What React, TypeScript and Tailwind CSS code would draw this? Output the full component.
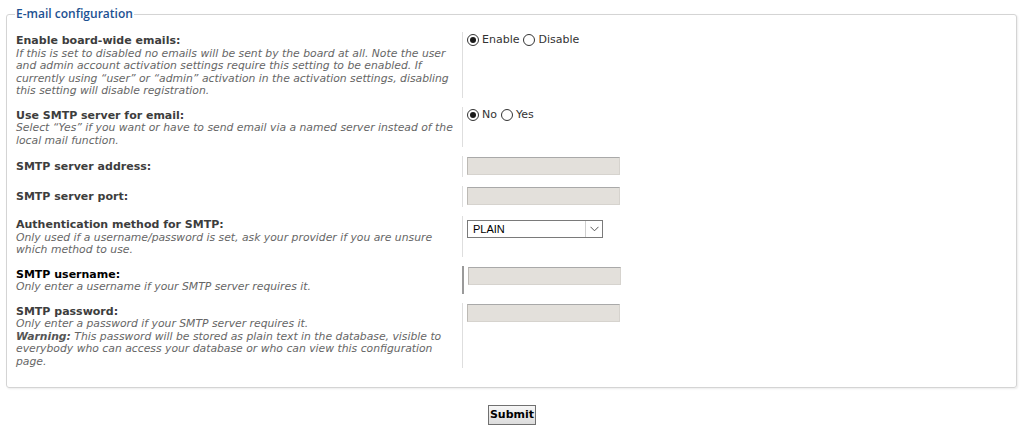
import React from 'react';

type Row = {
  label: string;
  explain?: React.ReactNode;
  control: React.ReactNode;
  active?: boolean;
};

const Radio: React.FC<{ checked?: boolean; label: string }> = ({ checked, label }) => (
  <span className="inline-flex items-center mr-[4px]">
    <span className="w-[12px] h-[12px] rounded-full border border-[#333] bg-white flex items-center justify-center">
      {checked && <span className="w-[6px] h-[6px] rounded-full bg-[#1a1a1a]" />}
    </span>
    <span className="ml-[3px] text-[#333]">{label}</span>
  </span>
);

const TextBox: React.FC = () => (
  <div className="w-[153px] h-[18px] bg-[#e3e0db] border border-[#d6d3ce] border-t-[#a9a9a9] border-l-[#bdbab5]" />
);

const Select: React.FC = () => (
  <div className="mt-[3px] w-[136px] h-[18px] bg-white border border-[#7a7a7a] flex items-stretch">
    <span className="flex-1 pl-[5px] leading-[16px] text-[11px] text-black font-['Liberation_Sans',Arial,sans-serif]">PLAIN</span>
    <span className="w-[17px] border-l border-[#cfcfcf] flex items-center justify-center">
      <svg width="9" height="6" viewBox="0 0 9 6" fill="none">
        <path d="M0.5 0.8 L4.5 4.8 L8.5 0.8" stroke="#555" strokeWidth="1" />
      </svg>
    </span>
  </div>
);

const rows: Row[] = [
  {
    label: 'Enable board-wide emails:',
    explain:
      'If this is set to disabled no emails will be sent by the board at all. Note the user and admin account activation settings require this setting to be enabled. If currently using “user” or “admin” activation in the activation settings, disabling this setting will disable registration.',
    control: (
      <div className="flex items-center mt-[1px]">
        <Radio checked label="Enable" />
        <Radio label="Disable" />
      </div>
    ),
  },
  {
    label: 'Use SMTP server for email:',
    explain: 'Select “Yes” if you want or have to send email via a named server instead of the local mail function.',
    control: (
      <div className="flex items-center mt-[1px]">
        <Radio checked label="No" />
        <Radio label="Yes" />
      </div>
    ),
  },
  { label: 'SMTP server address:', control: <TextBox /> },
  { label: 'SMTP server port:', control: <TextBox /> },
  {
    label: 'Authentication method for SMTP:',
    explain: 'Only used if a username/password is set, ask your provider if you are unsure which method to use.',
    control: <Select />,
  },
  {
    label: 'SMTP username:',
    explain: 'Only enter a username if your SMTP server requires it.',
    control: <TextBox />,
    active: true,
  },
  {
    label: 'SMTP password:',
    explain: (
      <>
        Only enter a password if your SMTP server requires it.
        <br />
        <b className="text-[#555]">Warning:</b> This password will be stored as plain text in the database, visible to
        everybody who can access your database or who can view this configuration page.
      </>
    ),
    control: <TextBox />,
  },
];

export default function App() {
  return (
    <div className="w-[1024px] h-[434px] bg-white font-['DejaVu_Sans',Verdana,sans-serif] text-[11px] leading-[12.5px] overflow-hidden">
      <fieldset className="mx-[6px] mr-[7px] mt-[6px] border border-[#d4d4d4] rounded-[3px] pl-[9px] pr-[10px] pb-[19px] shadow-[1px_1px_2px_rgba(0,0,0,0.08)]">
        <legend className="-ml-[1px] px-[1px] text-[#1c5192] text-[12px] leading-[16px] font-semibold font-['Open_Sans','DejaVu_Sans',sans-serif]">
          E-mail configuration
        </legend>
        <div className="pt-[10px] flex flex-col gap-[9px]">
          {rows.map((r) => (
            <div key={r.label} className="flex items-stretch">
              <div className={`w-[446px] shrink-0 pr-[4px] ${r.explain ? 'pt-[3px]' : 'pt-[5px]'}`}>
                <div className={`font-bold ${r.active ? 'text-black' : 'text-[#3d3d3d]'}`}>{r.label}</div>
                {r.explain && <div className="italic text-[#666] text-[10.8px]">{r.explain}</div>}
              </div>
              <div className={`flex-1 border-l pt-[1px] pb-[2px] pl-[4px] ${r.active ? 'border-[#9a9a9a] border-l-2 pl-[3px]' : 'border-[#dedede]'}`}>
                {r.control}
              </div>
            </div>
          ))}
        </div>
      </fieldset>
      <div className="flex justify-center mt-[17px]">
        <button className="h-[20px] px-[1px] border border-[#707070] bg-gradient-to-b from-[#f6f6f6] to-[#dcdcdc] text-black font-bold text-[11px] leading-[16px]">
          Submit
        </button>
      </div>
    </div>
  );
}
